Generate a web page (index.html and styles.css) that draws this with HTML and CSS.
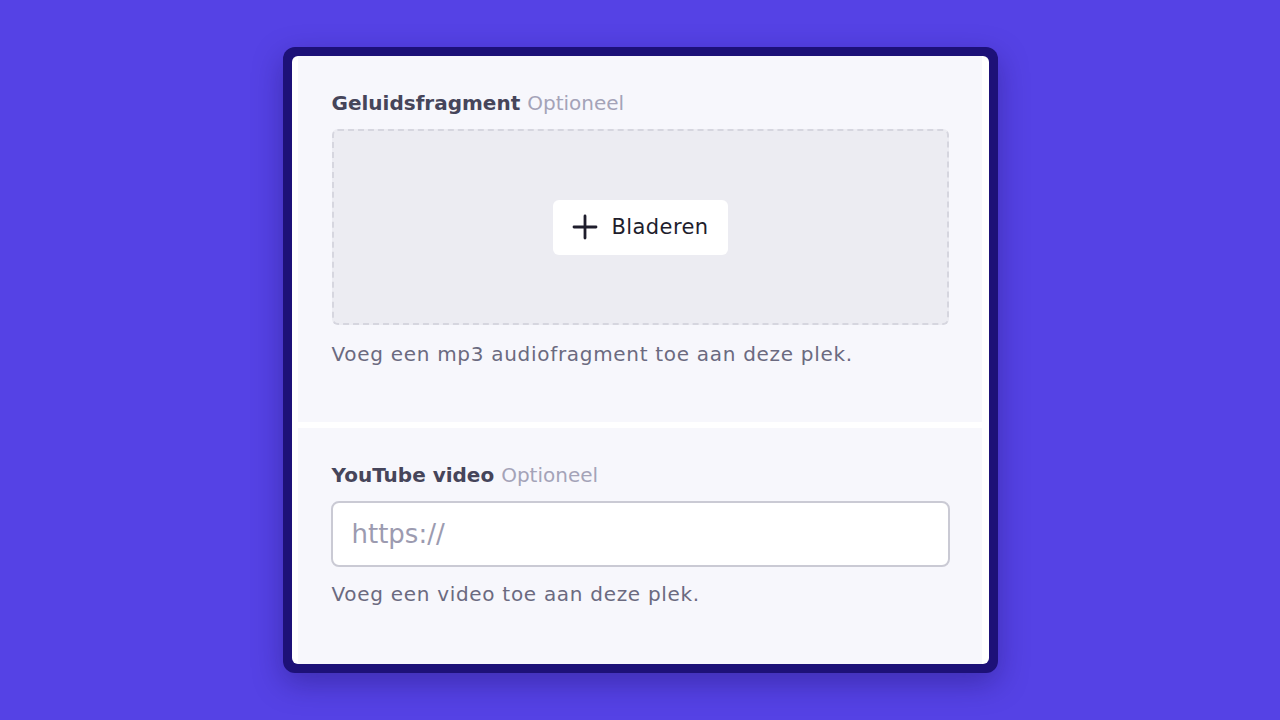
FILE: index.html
```html
<!DOCTYPE html>
<html lang="nl">
<head>
    <meta charset="UTF-8">
    <meta name="viewport" content="width=device-width, initial-scale=1.0">
    <title>Media toevoegen</title>
    <link rel="stylesheet" href="styles.css">
</head>
<body>
    <div class="frame">
        <div class="panel">
            <div class="field-block">
                <div class="field-label">Geluidsfragment <span class="optional">Optioneel</span></div>
                <div class="dropzone">
                    <button type="button" class="btn-browse">
                        <svg width="26" height="26" viewBox="0 0 26 26" fill="none" stroke="#1e1d2c" stroke-width="2.8" stroke-linecap="round">
                            <path d="M13 2v22M2 13h22"/>
                        </svg>
                        Bladeren
                    </button>
                </div>
                <p class="field-help">Voeg een mp3 audiofragment toe aan deze plek.</p>
            </div>
            <div class="field-block">
                <div class="field-label">YouTube video <span class="optional">Optioneel</span></div>
                <input type="text" class="text-input" placeholder="https://">
                <p class="field-help">Voeg een video toe aan deze plek.</p>
            </div>
        </div>
    </div>
</body>
</html>
```

FILE: styles.css
```css
* {
    margin: 0;
    padding: 0;
    box-sizing: border-box;
    font-family: 'DejaVu Sans', 'Noto Sans', sans-serif;
}

body {
    background: #5542e5;
    min-height: 100vh;
    display: flex;
    justify-content: center;
    padding-top: 47px;
}

.frame {
    width: 715px;
    height: 626px;
    background: #1d1178;
    border-radius: 12px;
    padding: 9px;
    box-shadow: 0 10px 30px rgba(20, 10, 80, 0.35);
}

.panel {
    background: white;
    border-radius: 6px;
    height: 100%;
    padding: 0 7px 0 6px;
    display: flex;
    flex-direction: column;
    gap: 6px;
}

.field-block {
    background: #f7f7fc;
    padding: 34px 33px 0 34px;
}

.field-block:first-child {
    height: 366px;
}

.field-block:last-child {
    flex: 1;
}

.field-label {
    font-size: 20px;
    font-weight: 700;
    color: #46455a;
    line-height: 26px;
    margin-bottom: 13px;
}

.optional {
    font-weight: 400;
    color: #a4a3b8;
}

.dropzone {
    height: 196px;
    background: #ececf2;
    border: 2px dashed #d6d6df;
    border-radius: 6px;
    display: flex;
    justify-content: center;
    align-items: center;
}

.btn-browse {
    width: 175px;
    height: 55px;
    background: white;
    border: none;
    border-radius: 6px;
    display: flex;
    align-items: center;
    justify-content: center;
    gap: 14px;
    font-size: 21px;
    letter-spacing: 0.4px;
    color: #1e1d2c;
    cursor: pointer;
}

.field-help {
    margin-top: 16px;
    font-size: 20px;
    letter-spacing: 0.7px;
    line-height: 26px;
    color: #6b6a80;
}

.text-input {
    width: calc(100% + 2px);
    margin-left: -1px;
    height: 66px;
    border: 2px solid #cacad4;
    border-radius: 8px;
    background: white;
    padding: 0 19px;
    font-size: 26px;
    color: #2a2938;
}

.text-input::placeholder {
    color: #9c9bb0;
}

.field-block:last-child .field-help {
    margin-top: 14px;
}
```
